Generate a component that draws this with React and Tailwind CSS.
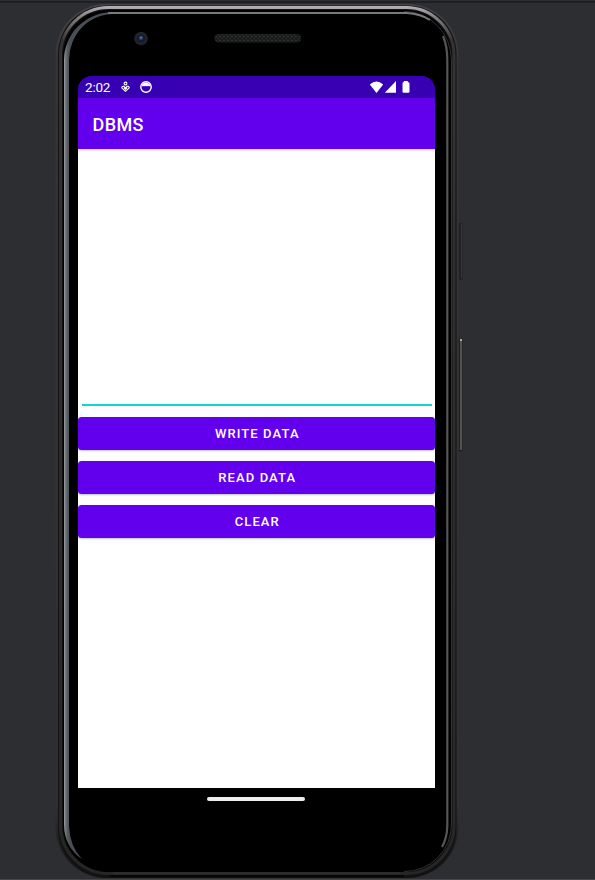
function PhoneFrame() {
  return (
    <svg className="absolute inset-0" width="595" height="880" viewBox="0 0 595 880" fill="none">
      <defs>
        <linearGradient id="rim" x1="0" y1="4" x2="0" y2="878" gradientUnits="userSpaceOnUse">
          <stop offset="0" stopColor="#454447" />
          <stop offset="0.07" stopColor="#353333" />
          <stop offset="0.92" stopColor="#302e2e" />
          <stop offset="1" stopColor="#111112" />
        </linearGradient>
        <linearGradient id="shine" x1="0" y1="6" x2="0" y2="874" gradientUnits="userSpaceOnUse">
          <stop offset="0" stopColor="#b5b1b5" />
          <stop offset="0.012" stopColor="#858386" />
          <stop offset="0.04" stopColor="#343333" />
          <stop offset="1" stopColor="#262626" />
        </linearGradient>
        <linearGradient id="side" x1="64" y1="0" x2="70" y2="0" gradientUnits="userSpaceOnUse">
          <stop offset="0" stopColor="#a0a0a2" />
          <stop offset="0.25" stopColor="#74777c" />
          <stop offset="0.6" stopColor="#555a63" />
          <stop offset="1" stopColor="#4a4e56" />
        </linearGradient>
        <pattern id="mesh" width="4" height="4" patternUnits="userSpaceOnUse">
          <rect width="4" height="4" fill="#1b1c1c" />
          <path d="M0 0h1v1H0zM2 2h1v1H2zM3 0h1v1H3z" fill="#303232" />
        </pattern>
      </defs>
      <path d="M0 2h595" stroke="#1f2023" strokeWidth="2" />
      <path d="M0 879.5h595" stroke="#494447" />
      <rect x="459" y="223" width="3.5" height="57" rx="1" fill="#202122" />
      <path d="M461.5 224v54" stroke="#38383a" />
      <rect x="459" y="338.5" width="3.5" height="113" rx="1" fill="#202021" />
      <path d="M461 340v110" stroke="#656363" strokeWidth="1.5" />
      <path d="M460 340h2" stroke="#aaa" strokeWidth="2" />
      <rect x="55.5" y="4" width="403" height="874" rx="51" fill="url(#rim)" />
      <rect x="58" y="5.5" width="398.5" height="871.5" rx="49" fill="#121212" />
      <rect x="60.5" y="7.5" width="393.5" height="866" rx="48" stroke="url(#shine)" strokeWidth="3" />
      <rect x="63" y="10" width="388.5" height="862" rx="46" fill="#000" />
      <path d="M404 11.500A47 49 0 0 1 451.500 60V824A47 47 0 0 1 404 871.500" stroke="#333335" />
      <path d="M64 60A49 48 0 0 1 113 12V14A44 46 0 0 0 69 60V826Q70 847 82 859Q64 847 64 824Z" fill="url(#side)" />
      <path d="M108 13H407Q421 14 430 20" stroke="#77797d" strokeWidth="2" />
      <path d="M443 36Q447.300 46 447.300 60V826Q447 838 442 847" stroke="#555559" strokeWidth="2.2" />
      <path d="M113 873H400" stroke="#2d2d2e" strokeWidth="2" />
      <path d="M109 876H404" stroke="#060607" strokeWidth="2" />
      <circle cx="141" cy="38.5" r="6.8" fill="#222325" />
      <circle cx="141" cy="38.5" r="4" fill="#141c34" />
      <circle cx="141" cy="38" r="2" fill="#304476" />
      <circle cx="141" cy="37.5" r=".7" fill="#8296bc" />
      <rect x="214.500" y="34" width="86.500" height="8.500" rx="4.200" fill="url(#mesh)" />
    </svg>
  );
}

function StatusBar() {
  return (
    <div className="flex h-[22px] items-center bg-[#3700b3] pl-[7px] text-white">
      <span className="w-[35px] pt-[1px] text-[13.5px] leading-[21px] tracking-[-0.2px]">2:02</span>
      <svg width="11" height="12" viewBox="0 0 11 12" fill="none" stroke="white" strokeWidth="1.1">
        <circle cx="5.5" cy="2.5" r="1.4" />
        <path d="M5.500 10.300 1.800 6.900Q2 5 4 5.300L5.500 7 7 5.300Q9 5 9.200 6.900ZM3.900 6.700 5.500 8.200l1.600-1.500" />
      </svg>
      <svg className="ml-[8.5px]" width="12" height="12" viewBox="0 0 12 12" fill="none">
        <circle cx="6" cy="6" r="5.2" stroke="white" strokeWidth="1.4" />
        <path d="M2 3.500Q6-.5 10 3.500V5.500L9 4.700 8 5.500 7 4.700 6 5.500 5 4.700 4 5.500 3 4.700 2 5.500Z" fill="white" />
      </svg>
      <svg className="ml-auto mr-[24px]" width="42" height="14" viewBox="0 0 42 14" fill="white">
        <path d="M.8 4.500Q7.500-1.500 14.200 4.500L7.500 13Z" />
        <path d="M15.800 12.700 27 1v11.700Z" />
        <path d="M34.800 2V1h4v1Q40.500 2 40.500 3.500v8.300q0 1-1 1h-5q-1 0-1-1V3.500Q33.500 2 34.800 2Z" />
      </svg>
    </div>
  );
}

function ActionButton({ children }) {
  return (
    <button className="flex h-[33px] w-full items-center justify-center rounded-[3.5px] bg-[#6200ee] pl-[1.5px] pt-[1.5px] text-[13px] font-medium leading-[18px] tracking-[1.1px] text-white shadow-[0_1px_2px_rgba(0,0,0,0.25)]">
      {children}
    </button>
  );
}

export default function App() {
  return (
    <div className="relative h-[880px] w-[595px] overflow-hidden bg-[#2d2e32] font-['Roboto',sans-serif]">
      <PhoneFrame />
      <div className="relative flex w-[513px] flex-col items-center pt-[76px]">
        <main className="flex h-[712px] w-[357px] flex-col overflow-hidden rounded-t-[14px] bg-[linear-gradient(#3700b3_22px,white_22px)]">
          <StatusBar />
          <header className="flex h-[51px] shrink-0 items-center bg-[#6200ee] pl-[14.5px] pt-[1px] text-[18px] font-medium tracking-[0.4px] text-white shadow-[0_1px_3px_rgba(0,0,0,0.2)]">
            DBMS
          </header>
          <div className="ml-[4px] mr-[3px] h-[257px] shrink-0 border-b-2 border-[#10d8c8]" />
          <div className="mt-[11px] flex flex-col gap-[10.75px]">
            <ActionButton>WRITE DATA</ActionButton>
            <ActionButton>READ DATA</ActionButton>
            <ActionButton>CLEAR</ActionButton>
          </div>
        </main>
        <div className="mr-[1px] mt-[9px] h-[4px] w-[98px] rounded-full bg-[#eeefee]" />
      </div>
    </div>
  );
}
